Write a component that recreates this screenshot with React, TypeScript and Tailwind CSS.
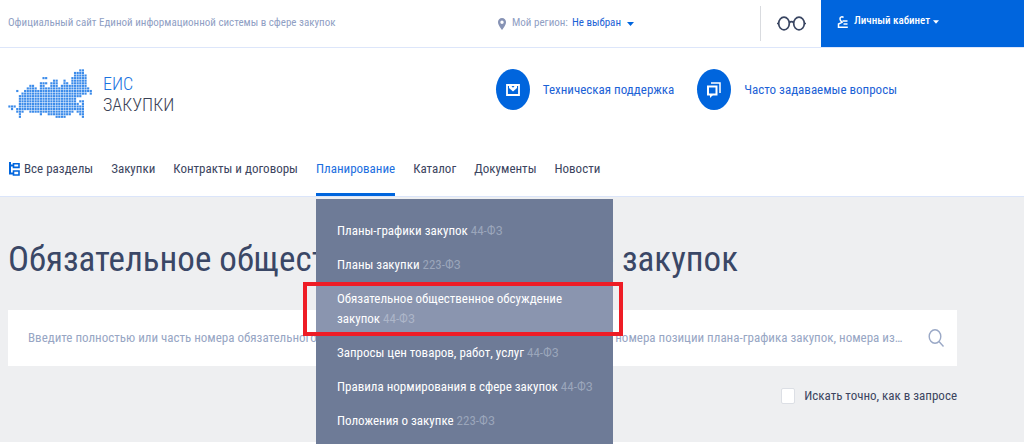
import type { ReactNode } from 'react'

// [row, first column, last column] of every run of dots in the logo map
const MAP_RUNS = [
  [0, 27, 28],
  [1, 25, 28],
  [2, 25, 29],
  [3, 13, 14], [3, 24, 29],
  [4, 17, 18], [4, 21, 21], [4, 24, 29],
  [5, 12, 14], [5, 16, 18], [5, 21, 22], [5, 24, 29],
  [6, 8, 9], [6, 12, 13], [6, 16, 18], [6, 20, 22], [6, 23, 29],
  [7, 7, 10], [7, 12, 30],
  [8, 3, 3], [8, 6, 31],
  [9, 5, 29], [9, 31, 31],
  [10, 4, 27],
  [11, 4, 25],
  [12, 4, 25], [12, 27, 28],
  [13, 4, 26], [13, 28, 28],
  [14, 0, 2], [14, 4, 28],
  [15, 1, 1], [15, 3, 28],
  [16, 3, 5], [16, 8, 24], [16, 26, 28],
  [17, 4, 4], [17, 12, 12], [17, 15, 23], [17, 27, 28],
  [18, 4, 4], [18, 18, 21], [18, 28, 28],
]

const NAV = ['Закупки', 'Контракты и договоры', 'Планирование', 'Каталог', 'Документы', 'Новости']

const MENU = [
  { label: 'Планы-графики закупок', law: '44-ФЗ' },
  { label: 'Планы закупки', law: '223-ФЗ' },
  { label: 'Обязательное общественное обсуждение закупок', law: '44-ФЗ', active: true },
  { label: 'Запросы цен товаров, работ, услуг', law: '44-ФЗ' },
  { label: 'Правила нормирования в сфере закупок', law: '44-ФЗ' },
  { label: 'Положения о закупке', law: '223-ФЗ' },
]

function MapLogo() {
  return (
    <svg viewBox="0 0 256 152" preserveAspectRatio="none" className="h-[49px] w-[84px]" aria-hidden="true">
      {MAP_RUNS.flatMap(([row, from, to]) =>
        Array.from({ length: to - from + 1 }, (_, i) => (
          <rect key={`${row}-${from + i}`} x={(from + i) * 8 + 1} y={row * 8 + 1} width="6.6" height="6.6" fill="#3b8bea" />
        )),
      )}
    </svg>
  )
}

function Caret({ className }: { className: string }) {
  return (
    <svg viewBox="0 0 7 4" className={className} fill="currentColor" aria-hidden="true">
      <path d="M0 0h7L3.5 4z" />
    </svg>
  )
}

function SupportLink({ icon, children }: { icon: ReactNode; children: ReactNode }) {
  return (
    <a href="#" className="flex items-center gap-[13px] text-[13px] text-[#1c62d6]">
      <span className="flex h-[41px] w-[34px] items-center justify-center rounded-[50%] bg-[#0065dd] text-white">
        {icon}
      </span>
      {children}
    </a>
  )
}

function TopBar() {
  return (
    <div className="flex h-12 items-stretch border-b border-[#dde6fa] text-[11px]">
      <p className="flex flex-1 items-center pl-2 text-[#8fa0c4]">
        Официальный сайт Единой информационной системы в сфере закупок
      </p>
      <button type="button" className="flex w-[262px] items-center text-[#8fa0c4]">
        <svg viewBox="0 0 8 12" className="mr-[6px] h-3 w-2" aria-hidden="true">
          <path d="M4 0a4 4 0 0 0-4 4.200C0 7 4 12 4 12s4-5 4-7.800A4 4 0 0 0 4 0zm0 2.500a1.700 1.700 0 1 1 0 3.400 1.700 1.700 0 0 1 0-3.400z" fill="#8793b5" fillRule="evenodd" />
        </svg>
        Мой регион:
        <span className="ml-1 text-[#1c62d6]">Не выбран</span>
        <Caret className="ml-[6px] h-1 w-[7px] text-[#0065dd]" />
      </button>
      <div className="flex w-[61px] py-[6px]">
        <button
          type="button"
          aria-label="Версия для слабовидящих"
          className="flex flex-1 items-center justify-center border-l border-[#d9dbdf]"
        >
          <svg viewBox="0 0 29 15" className="h-[15px] w-[29px]" fill="none" stroke="#3a4662" strokeWidth="1.700" aria-hidden="true">
            <ellipse cx="7" cy="7.500" rx="5.300" ry="6.300" />
            <ellipse cx="22" cy="7.500" rx="5.300" ry="6.300" />
            <path d="M12.300 6.500c1.200-1 3.200-1 4.400 0M0 7.500h2M27 7.500h2" />
          </svg>
        </button>
      </div>
      <button type="button" className="flex w-[203px] items-start bg-[#0065dd] pt-[13px] pl-4 leading-4 font-medium text-white">
        <svg viewBox="0 0 11 12" className="mt-[3px] mr-[6px] h-3 w-[11px]" fill="none" stroke="currentColor" strokeWidth="1.500" aria-hidden="true">
          <path d="M6.500 1.500C5.500.500 3 .500 3 2.800c0 1 .300 1.700 1 2.300L5 6.300 1.500 8v3.200h9.300M5.500 5h5M6.500 8h4" />
        </svg>
        Личный кабинет
        <Caret className="mt-[7px] ml-[3px] h-1 w-[6px]" />
      </button>
    </div>
  )
}

function Header() {
  return (
    <header className="flex items-start pt-[21px] pr-[127px] pl-2">
      <div className="flex-1">
        <a href="#" className="inline-flex items-center gap-[11px] text-lg leading-[21px] font-light">
          <MapLogo />
          <span>
            <span className="block text-[#1a73e0]">ЕИС</span>
            <span className="block text-[#3a4255]">ЗАКУПКИ</span>
          </span>
        </a>
      </div>
      <div className="flex gap-[23px]">
        <SupportLink
          icon={
            <svg viewBox="0 0 14 12" className="h-3 w-[14px]" fill="none" stroke="currentColor" strokeWidth="1.800" aria-hidden="true">
              <path d="M1 1h12v10H1z" />
              <path d="M3 2h8v2L7 7.500 3 4z" fill="currentColor" stroke="none" />
              <path d="M5.500 2h3L7 3.800z" fill="#0065dd" stroke="none" />
            </svg>
          }
        >
          Техническая поддержка
        </SupportLink>
        <SupportLink
          icon={
            <svg viewBox="0 0 14 16" className="h-4 w-[14px]" fill="none" stroke="currentColor" strokeWidth="1.500" aria-hidden="true">
              <path d="M4 1h9v10" />
              <path d="M1 4.500h8.500v8H1z" strokeWidth="2" />
              <path d="M3 12v4l3-3z" fill="currentColor" stroke="none" />
            </svg>
          }
        >
          Часто задаваемые вопросы
        </SupportLink>
      </div>
    </header>
  )
}

function PlanningMenu() {
  return (
    <ul className="absolute top-[58px] left-0 z-10 w-[297px] bg-[#6e7b97] pt-[15px] pb-8">
      {MENU.map(({ label, law, active }) => (
        <li key={label} className={active ? 'relative bg-[#8a95af]' : ''}>
          <a href="#" className="block py-[7px] pr-5 pl-[21px] text-[13px] leading-5 text-white">
            {label} <span className={active ? 'text-[#adb6c9]' : 'text-[#9ba6bb]'}>{law}</span>
          </a>
          {active && (
            <span className="pointer-events-none absolute inset-y-0 -right-[10px] -left-[13px] border-4 border-[#ee1c25]" />
          )}
        </li>
      ))}
    </ul>
  )
}

function Nav() {
  return (
    <nav className="mt-4 border-b border-[#dbe5fa] text-[13px] leading-5 text-[#3c4560]">
      <ul className="flex gap-[18px] pl-[9px]">
        <li>
          <a href="#" className="flex items-center gap-1 pt-[18px] pb-[17px]">
            <svg viewBox="0 0 11 14" className="h-[14px] w-[11px]" fill="none" stroke="#0065dd" strokeWidth="1.600" aria-hidden="true">
              <path d="M1 0v11.500h3M1 3.500h3" strokeWidth="2" />
              <path d="M4.500 1.800h5.500v3.600H4.500zM4.500 9h5.500v4H4.500z" />
            </svg>
            Все разделы
          </a>
        </li>
        {NAV.map((item) => (
          <li key={item} className="relative">
            <a
              href="#"
              className={
                item === 'Планирование'
                  ? 'block border-b-[3px] border-[#0065dd] pt-[18px] pb-[14px] text-[#1c6fe0]'
                  : 'block pt-[18px] pb-[17px]'
              }
            >
              {item}
            </a>
            {item === 'Планирование' && <PlanningMenu />}
          </li>
        ))}
      </ul>
    </nav>
  )
}

function SearchSection() {
  return (
    <main className="bg-[#eeeff1] pt-10 pr-[67px] pb-9 pl-2">
      <h1 className="text-[35px] leading-[46px] whitespace-nowrap text-[#3a4766]">
        Обязательное общественное обсуждение закупок
      </h1>
      <form className="mt-[27px]" onSubmit={(e) => e.preventDefault()}>
        <div className="flex h-14 items-center bg-white pr-[13px] pl-5">
          <input
            type="text"
            aria-label="Поиск"
            className="min-w-0 flex-1 text-[13px] text-ellipsis outline-none placeholder:text-[#97a6c4]"
            placeholder="Введите полностью или часть номера обязательного общественного обсуждения и наименования закупок, номера позиции плана-графика закупок, номера извещения"
          />
          <button type="submit" aria-label="Найти" className="ml-6">
            <svg viewBox="0 0 16 18" className="h-[18px] w-4" fill="none" stroke="#9aa8c6" strokeWidth="1.400" aria-hidden="true">
              <ellipse cx="7" cy="7.500" rx="5.800" ry="6.800" />
              <path d="M11 12.500l4.500 5" />
            </svg>
          </button>
        </div>
        <label className="mt-5 flex items-center justify-end gap-[9px] text-[13px] leading-5 text-[#3c4560]">
          <input
            type="checkbox"
            className="h-4 w-[14px] appearance-none rounded-[2px] border border-[#dcdfe5] bg-white checked:bg-[#0065dd]"
          />
          Искать точно, как в запросе
        </label>
      </form>
    </main>
  )
}

export default function App() {
  return (
    <div className="min-h-screen overflow-hidden bg-white font-['Roboto_Condensed',Roboto,sans-serif]">
      <TopBar />
      <Header />
      <Nav />
      <SearchSection />
    </div>
  )
}
